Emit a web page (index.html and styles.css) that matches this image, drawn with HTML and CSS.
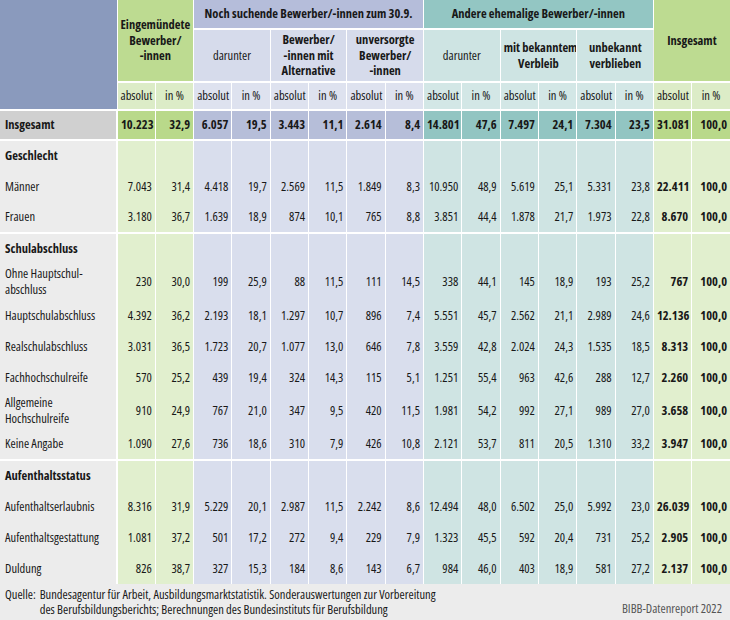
FILE: index.html
```html
<!DOCTYPE html>
<html lang="de">
<head>
<meta charset="utf-8">
<title>Bewerber/-innen Verbleib</title>
<link rel="stylesheet" href="styles.css">
</head>
<body>
<table class="tbl">
  <colgroup>
    <col class="c-label">
    <col span="16">
  </colgroup>
  <thead>
    <tr class="h1">
      <th class="corner" rowspan="3"></th>
      <th class="g1" colspan="2" rowspan="2">Eingemündete<br>Bewerber/<br>-innen</th>
      <th class="b1" colspan="6">Noch suchende Bewerber/-innen zum 30.9.</th>
      <th class="t1" colspan="6">Andere ehemalige Bewerber/-innen</th>
      <th class="g1" colspan="2" rowspan="2">Insgesamt</th>
    </tr>
    <tr class="h2">
      <th class="b2 norm" colspan="2">darunter</th>
      <th class="b2" colspan="2">Bewerber/<br>-innen mit<br>Alternative</th>
      <th class="b2" colspan="2">unversorgte<br>Bewerber/<br>-innen</th>
      <th class="t2 norm" colspan="2">darunter</th>
      <th class="t2" colspan="2">mit bekanntem<br>Verbleib</th>
      <th class="t2" colspan="2">unbekannt<br>verblieben</th>
    </tr>
    <tr class="h3">
      <th class="g3">absolut</th><th class="g3">in %</th>
      <th class="b3">absolut</th><th class="b3">in %</th>
      <th class="b3">absolut</th><th class="b3">in %</th>
      <th class="b3">absolut</th><th class="b3">in %</th>
      <th class="t3">absolut</th><th class="t3">in %</th>
      <th class="t3">absolut</th><th class="t3">in %</th>
      <th class="t3">absolut</th><th class="t3">in %</th>
      <th class="g3">absolut</th><th class="g3">in %</th>
    </tr>
  </thead>
  <tbody>
    <tr class="total">
      <td class="lbl">Insgesamt</td>
      <td class="g">10.223</td><td class="g">32,9</td>
      <td class="b">6.057</td><td class="b">19,5</td>
      <td class="b">3.443</td><td class="b">11,1</td>
      <td class="b">2.614</td><td class="b">8,4</td>
      <td class="t">14.801</td><td class="t">47,6</td>
      <td class="t">7.497</td><td class="t">24,1</td>
      <td class="t">7.304</td><td class="t">23,5</td>
      <td class="g">31.081</td><td class="g">100,0</td>
    </tr>

    <tr class="sec">
      <td class="lbl head">Geschlecht</td>
      <td class="g"></td><td class="g"></td>
      <td class="b"></td><td class="b"></td><td class="b"></td><td class="b"></td><td class="b"></td><td class="b"></td>
      <td class="t"></td><td class="t"></td><td class="t"></td><td class="t"></td><td class="t"></td><td class="t"></td>
      <td class="g"></td><td class="g"></td>
    </tr>
    <tr>
      <td class="lbl">Männer</td>
      <td class="g">7.043</td><td class="g">31,4</td>
      <td class="b">4.418</td><td class="b">19,7</td>
      <td class="b">2.569</td><td class="b">11,5</td>
      <td class="b">1.849</td><td class="b">8,3</td>
      <td class="t">10.950</td><td class="t">48,9</td>
      <td class="t">5.619</td><td class="t">25,1</td>
      <td class="t">5.331</td><td class="t">23,8</td>
      <td class="g bold">22.411</td><td class="g bold">100,0</td>
    </tr>
    <tr>
      <td class="lbl">Frauen</td>
      <td class="g">3.180</td><td class="g">36,7</td>
      <td class="b">1.639</td><td class="b">18,9</td>
      <td class="b">874</td><td class="b">10,1</td>
      <td class="b">765</td><td class="b">8,8</td>
      <td class="t">3.851</td><td class="t">44,4</td>
      <td class="t">1.878</td><td class="t">21,7</td>
      <td class="t">1.973</td><td class="t">22,8</td>
      <td class="g bold">8.670</td><td class="g bold">100,0</td>
    </tr>

    <tr class="sec">
      <td class="lbl head">Schulabschluss</td>
      <td class="g"></td><td class="g"></td>
      <td class="b"></td><td class="b"></td><td class="b"></td><td class="b"></td><td class="b"></td><td class="b"></td>
      <td class="t"></td><td class="t"></td><td class="t"></td><td class="t"></td><td class="t"></td><td class="t"></td>
      <td class="g"></td><td class="g"></td>
    </tr>
    <tr class="two">
      <td class="lbl">Ohne Hauptschul-<br>abschluss</td>
      <td class="g">230</td><td class="g">30,0</td>
      <td class="b">199</td><td class="b">25,9</td>
      <td class="b">88</td><td class="b">11,5</td>
      <td class="b">111</td><td class="b">14,5</td>
      <td class="t">338</td><td class="t">44,1</td>
      <td class="t">145</td><td class="t">18,9</td>
      <td class="t">193</td><td class="t">25,2</td>
      <td class="g bold">767</td><td class="g bold">100,0</td>
    </tr>
    <tr>
      <td class="lbl">Hauptschulabschluss</td>
      <td class="g">4.392</td><td class="g">36,2</td>
      <td class="b">2.193</td><td class="b">18,1</td>
      <td class="b">1.297</td><td class="b">10,7</td>
      <td class="b">896</td><td class="b">7,4</td>
      <td class="t">5.551</td><td class="t">45,7</td>
      <td class="t">2.562</td><td class="t">21,1</td>
      <td class="t">2.989</td><td class="t">24,6</td>
      <td class="g bold">12.136</td><td class="g bold">100,0</td>
    </tr>
    <tr>
      <td class="lbl">Realschulabschluss</td>
      <td class="g">3.031</td><td class="g">36,5</td>
      <td class="b">1.723</td><td class="b">20,7</td>
      <td class="b">1.077</td><td class="b">13,0</td>
      <td class="b">646</td><td class="b">7,8</td>
      <td class="t">3.559</td><td class="t">42,8</td>
      <td class="t">2.024</td><td class="t">24,3</td>
      <td class="t">1.535</td><td class="t">18,5</td>
      <td class="g bold">8.313</td><td class="g bold">100,0</td>
    </tr>
    <tr>
      <td class="lbl">Fachhochschulreife</td>
      <td class="g">570</td><td class="g">25,2</td>
      <td class="b">439</td><td class="b">19,4</td>
      <td class="b">324</td><td class="b">14,3</td>
      <td class="b">115</td><td class="b">5,1</td>
      <td class="t">1.251</td><td class="t">55,4</td>
      <td class="t">963</td><td class="t">42,6</td>
      <td class="t">288</td><td class="t">12,7</td>
      <td class="g bold">2.260</td><td class="g bold">100,0</td>
    </tr>
    <tr class="two">
      <td class="lbl">Allgemeine<br>Hochschulreife</td>
      <td class="g">910</td><td class="g">24,9</td>
      <td class="b">767</td><td class="b">21,0</td>
      <td class="b">347</td><td class="b">9,5</td>
      <td class="b">420</td><td class="b">11,5</td>
      <td class="t">1.981</td><td class="t">54,2</td>
      <td class="t">992</td><td class="t">27,1</td>
      <td class="t">989</td><td class="t">27,0</td>
      <td class="g bold">3.658</td><td class="g bold">100,0</td>
    </tr>
    <tr>
      <td class="lbl">Keine Angabe</td>
      <td class="g">1.090</td><td class="g">27,6</td>
      <td class="b">736</td><td class="b">18,6</td>
      <td class="b">310</td><td class="b">7,9</td>
      <td class="b">426</td><td class="b">10,8</td>
      <td class="t">2.121</td><td class="t">53,7</td>
      <td class="t">811</td><td class="t">20,5</td>
      <td class="t">1.310</td><td class="t">33,2</td>
      <td class="g bold">3.947</td><td class="g bold">100,0</td>
    </tr>

    <tr class="sec">
      <td class="lbl head">Aufenthaltsstatus</td>
      <td class="g"></td><td class="g"></td>
      <td class="b"></td><td class="b"></td><td class="b"></td><td class="b"></td><td class="b"></td><td class="b"></td>
      <td class="t"></td><td class="t"></td><td class="t"></td><td class="t"></td><td class="t"></td><td class="t"></td>
      <td class="g"></td><td class="g"></td>
    </tr>
    <tr>
      <td class="lbl">Aufenthaltserlaubnis</td>
      <td class="g">8.316</td><td class="g">31,9</td>
      <td class="b">5.229</td><td class="b">20,1</td>
      <td class="b">2.987</td><td class="b">11,5</td>
      <td class="b">2.242</td><td class="b">8,6</td>
      <td class="t">12.494</td><td class="t">48,0</td>
      <td class="t">6.502</td><td class="t">25,0</td>
      <td class="t">5.992</td><td class="t">23,0</td>
      <td class="g bold">26.039</td><td class="g bold">100,0</td>
    </tr>
    <tr>
      <td class="lbl">Aufenthaltsgestattung</td>
      <td class="g">1.081</td><td class="g">37,2</td>
      <td class="b">501</td><td class="b">17,2</td>
      <td class="b">272</td><td class="b">9,4</td>
      <td class="b">229</td><td class="b">7,9</td>
      <td class="t">1.323</td><td class="t">45,5</td>
      <td class="t">592</td><td class="t">20,4</td>
      <td class="t">731</td><td class="t">25,2</td>
      <td class="g bold">2.905</td><td class="g bold">100,0</td>
    </tr>
    <tr>
      <td class="lbl">Duldung</td>
      <td class="g">826</td><td class="g">38,7</td>
      <td class="b">327</td><td class="b">15,3</td>
      <td class="b">184</td><td class="b">8,6</td>
      <td class="b">143</td><td class="b">6,7</td>
      <td class="t">984</td><td class="t">46,0</td>
      <td class="t">403</td><td class="t">18,9</td>
      <td class="t">581</td><td class="t">27,2</td>
      <td class="g bold">2.137</td><td class="g bold">100,0</td>
    </tr>
  </tbody>
</table>

<footer class="foot">
  <div class="source">
    <span class="source-key">Quelle:</span>
    <span class="source-text">Bundesagentur für Arbeit, Ausbildungsmarktstatistik. Sonderauswertungen zur Vorbereitung<br>des Berufsbildungsberichts; Berechnungen des Bundesinstituts für Berufsbildung</span>
  </div>
  <div class="brand">BIBB-Datenreport 2022</div>
</footer>
</body>
</html>
```

FILE: styles.css
```css
* { box-sizing: border-box; }

body {
  margin: 0;
  width: 730px;
  background: #ececec;
  color: #181818;
  font-family: "Open Sans", "Roboto Condensed", "Liberation Sans", sans-serif;
  font-stretch: 77%;
  font-size: 12.5px;
}

.tbl {
  width: 730px;
  table-layout: fixed;
  border-collapse: collapse;
}

.c-label { width: 117px; }

.tbl th,
.tbl td {
  padding: 0 3px;
  border-right: 1px solid #fff;
  line-height: 16px;
  white-space: nowrap;
  overflow: hidden;
}

.tbl th:last-child,
.tbl td:last-child { border-right: 0; }

.tbl th {
  font-weight: bold;
  text-align: center;
  vertical-align: middle;
  line-height: 15.5px;
}

.tbl th.norm { font-weight: normal; }

.h1 { height: 29px; }
.h2 { height: 53px; }
.h2 th { border-top: 2px solid #fff; }
.h3 { height: 28px; }
.h3 th { border-top: 2px solid #fff; font-weight: normal; }

.corner { background: #8a9abd; border-right: 2px solid #fff; }

.g1 { background: #bddb91; }
.b1 { background: #b5bdda; }
.t1 { background: #93c6c3; }
.b2 { background: #d6dbeb; }
.t2 { background: #cee4e3; }
.g3 { background: #dcecc7; }
.b3 { background: #dee2ef; }
.t3 { background: #d3e7e6; }

.tbl td { text-align: right; vertical-align: middle; }

.tbl td.lbl {
  text-align: left;
  padding-left: 5px;
  background: #ececec;
  border-right: 2px solid #fff;
}

.g { background: #e1efce; }
.b { background: #d9deed; }
.t { background: #cfe4e3; }

.bold { font-weight: bold; }

.tbl tbody tr { height: 31px; }
.tbl tbody tr.two { height: 36px; }

.tbl tr.total { height: 30px; font-weight: bold; }
.total td { border-top: 2px solid #fff; }
.total td.lbl { background: #d0d0d0; }
.total .g { background: #b9d98a; }
.total .b { background: #b6bed9; }
.total .t { background: #92c5c2; }

.sec td { border-top: 2px solid #fff; }
.lbl.head { font-weight: bold; }

.foot {
  display: flex;
  justify-content: space-between;
  align-items: flex-end;
  padding: 3px 8px 0 5px;
  line-height: 15px;
}

.source { display: flex; gap: 4px; }

.brand { color: #555; padding-bottom: 1px; }
```
